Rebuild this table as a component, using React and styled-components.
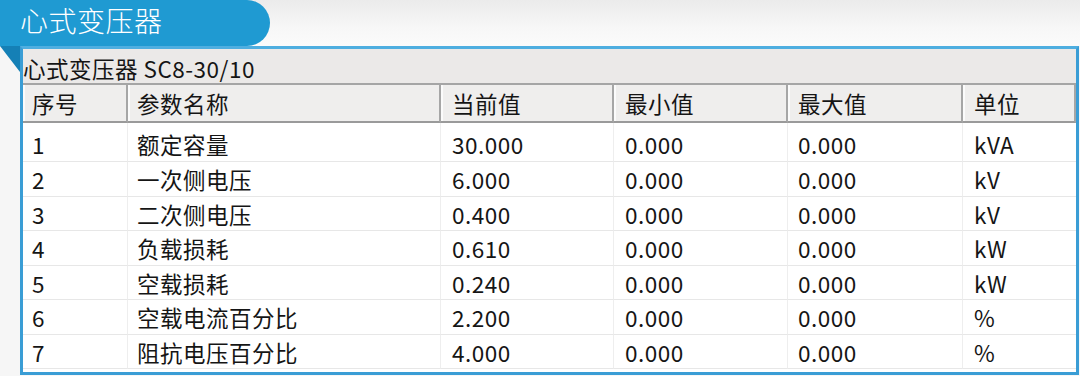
import React from "react";
import styled, { createGlobalStyle } from "styled-components";

const GlobalStyle = createGlobalStyle`
  html, body { margin: 0; padding: 0; }
  body {
    background: #f6f6f6;
    font-family: "Noto Sans CJK SC", "Noto Sans", sans-serif;
    color: #151515;
  }
`;

const Page = styled.div`
  width: 1080px;
  height: 376px;
  overflow: hidden;
  display: flex;
  flex-direction: column;
  background: #f6f6f6;
`;

const TopBar = styled.div`
  height: 46px;
  flex: none;
  display: flex;
  background: linear-gradient(#ebebeb, #f7f7f7 60%, #fbfbfb);
`;

const Tab = styled.div`
  width: 270px;
  height: 46px;
  box-sizing: border-box;
  background: #1f9ad2;
  border-radius: 0 24px 24px 0;
  color: #ffffff;
  font-size: 28px;
  font-weight: 300;
  line-height: 41px;
  padding-left: 20px;
  letter-spacing: 0.5px;
`;

const Body = styled.div`
  flex: 1;
  display: flex;
`;

const Gutter = styled.div`
  width: 20px;
  flex: none;
  svg { display: block; }
`;

const Panel = styled.div`
  width: 1059px;
  height: 329px;
  box-sizing: border-box;
  border: 3px solid #3a9dd5;
  border-top: 3px solid #4eaee0;
  background: #ffffff;
  display: flex;
  flex-direction: column;
`;

const Caption = styled.div`
  height: 34px;
  flex: none;
  background: #ebe9e8;
  font-size: 22.5px;
  letter-spacing: 0.5px;
  line-height: 38px;
  padding-left: 0;
  white-space: nowrap;
`;

const Grid = styled.div`
  display: grid;
  grid-template-columns: 105px 313px 173px 174px 175px 1fr;
`;

const HeadCell = styled.div`
  height: 40px;
  box-sizing: border-box;
  background: #efeeed;
  border-top: 2px solid #a5a5a5;
  border-bottom: 2px solid #9a9a9a;
  border-right: 2px solid #a6a6a6;
  box-shadow: inset 2px 0 0 #fbfbfb;
  font-size: 22.5px;
  letter-spacing: 0.5px;
  line-height: 36px;
  padding-left: ${(p) => p.$pad}px;
  white-space: nowrap;
  &:last-child { border-right: none; }
`;

const Cell = styled.div`
  height: ${(p) => (p.$first ? 39 : 34.5)}px;
  box-sizing: border-box;
  padding-top: ${(p) => (p.$first ? 4 : 0)}px;
  border-bottom: 1px solid #e7e7e7;
  border-right: 1px solid #eeeeee;
  font-size: 22.5px;
  letter-spacing: 0.5px;
  line-height: 34px;
  padding-left: ${(p) => p.$pad}px;
  white-space: nowrap;
  &:nth-child(6n) { border-right: none; }
`;

const columns = [
  { title: "序号", pad: 9 },
  { title: "参数名称", pad: 9 },
  { title: "当前值", pad: 11 },
  { title: "最小值", pad: 11 },
  { title: "最大值", pad: 10 },
  { title: "单位", pad: 11 },
];

const rows = [
  ["1", "额定容量", "30.000", "0.000", "0.000", "kVA"],
  ["2", "一次侧电压", "6.000", "0.000", "0.000", "kV"],
  ["3", "二次侧电压", "0.400", "0.000", "0.000", "kV"],
  ["4", "负载损耗", "0.610", "0.000", "0.000", "kW"],
  ["5", "空载损耗", "0.240", "0.000", "0.000", "kW"],
  ["6", "空载电流百分比", "2.200", "0.000", "0.000", "%"],
  ["7", "阻抗电压百分比", "4.000", "0.000", "0.000", "%"],
];

export default function App() {
  return (
    <>
      <GlobalStyle />
      <Page>
        <TopBar>
          <Tab>心式变压器</Tab>
        </TopBar>
        <Body>
          <Gutter>
            <svg width="20" height="26" viewBox="0 0 20 26">
              <polygon points="0,0 20,0 20,26" fill="#1580b6" />
            </svg>
          </Gutter>
          <Panel>
            <Caption>心式变压器 SC8-30/10</Caption>
            <Grid>
              {columns.map((c) => (
                <HeadCell key={c.title} $pad={c.pad}>
                  {c.title}
                </HeadCell>
              ))}
              {rows.map((r, ri) =>
                r.map((v, ci) => (
                  <Cell key={ri + "-" + ci} $pad={columns[ci].pad} $first={ri === 0}>
                    {v}
                  </Cell>
                ))
              )}
            </Grid>
          </Panel>
        </Body>
      </Page>
    </>
  );
}
